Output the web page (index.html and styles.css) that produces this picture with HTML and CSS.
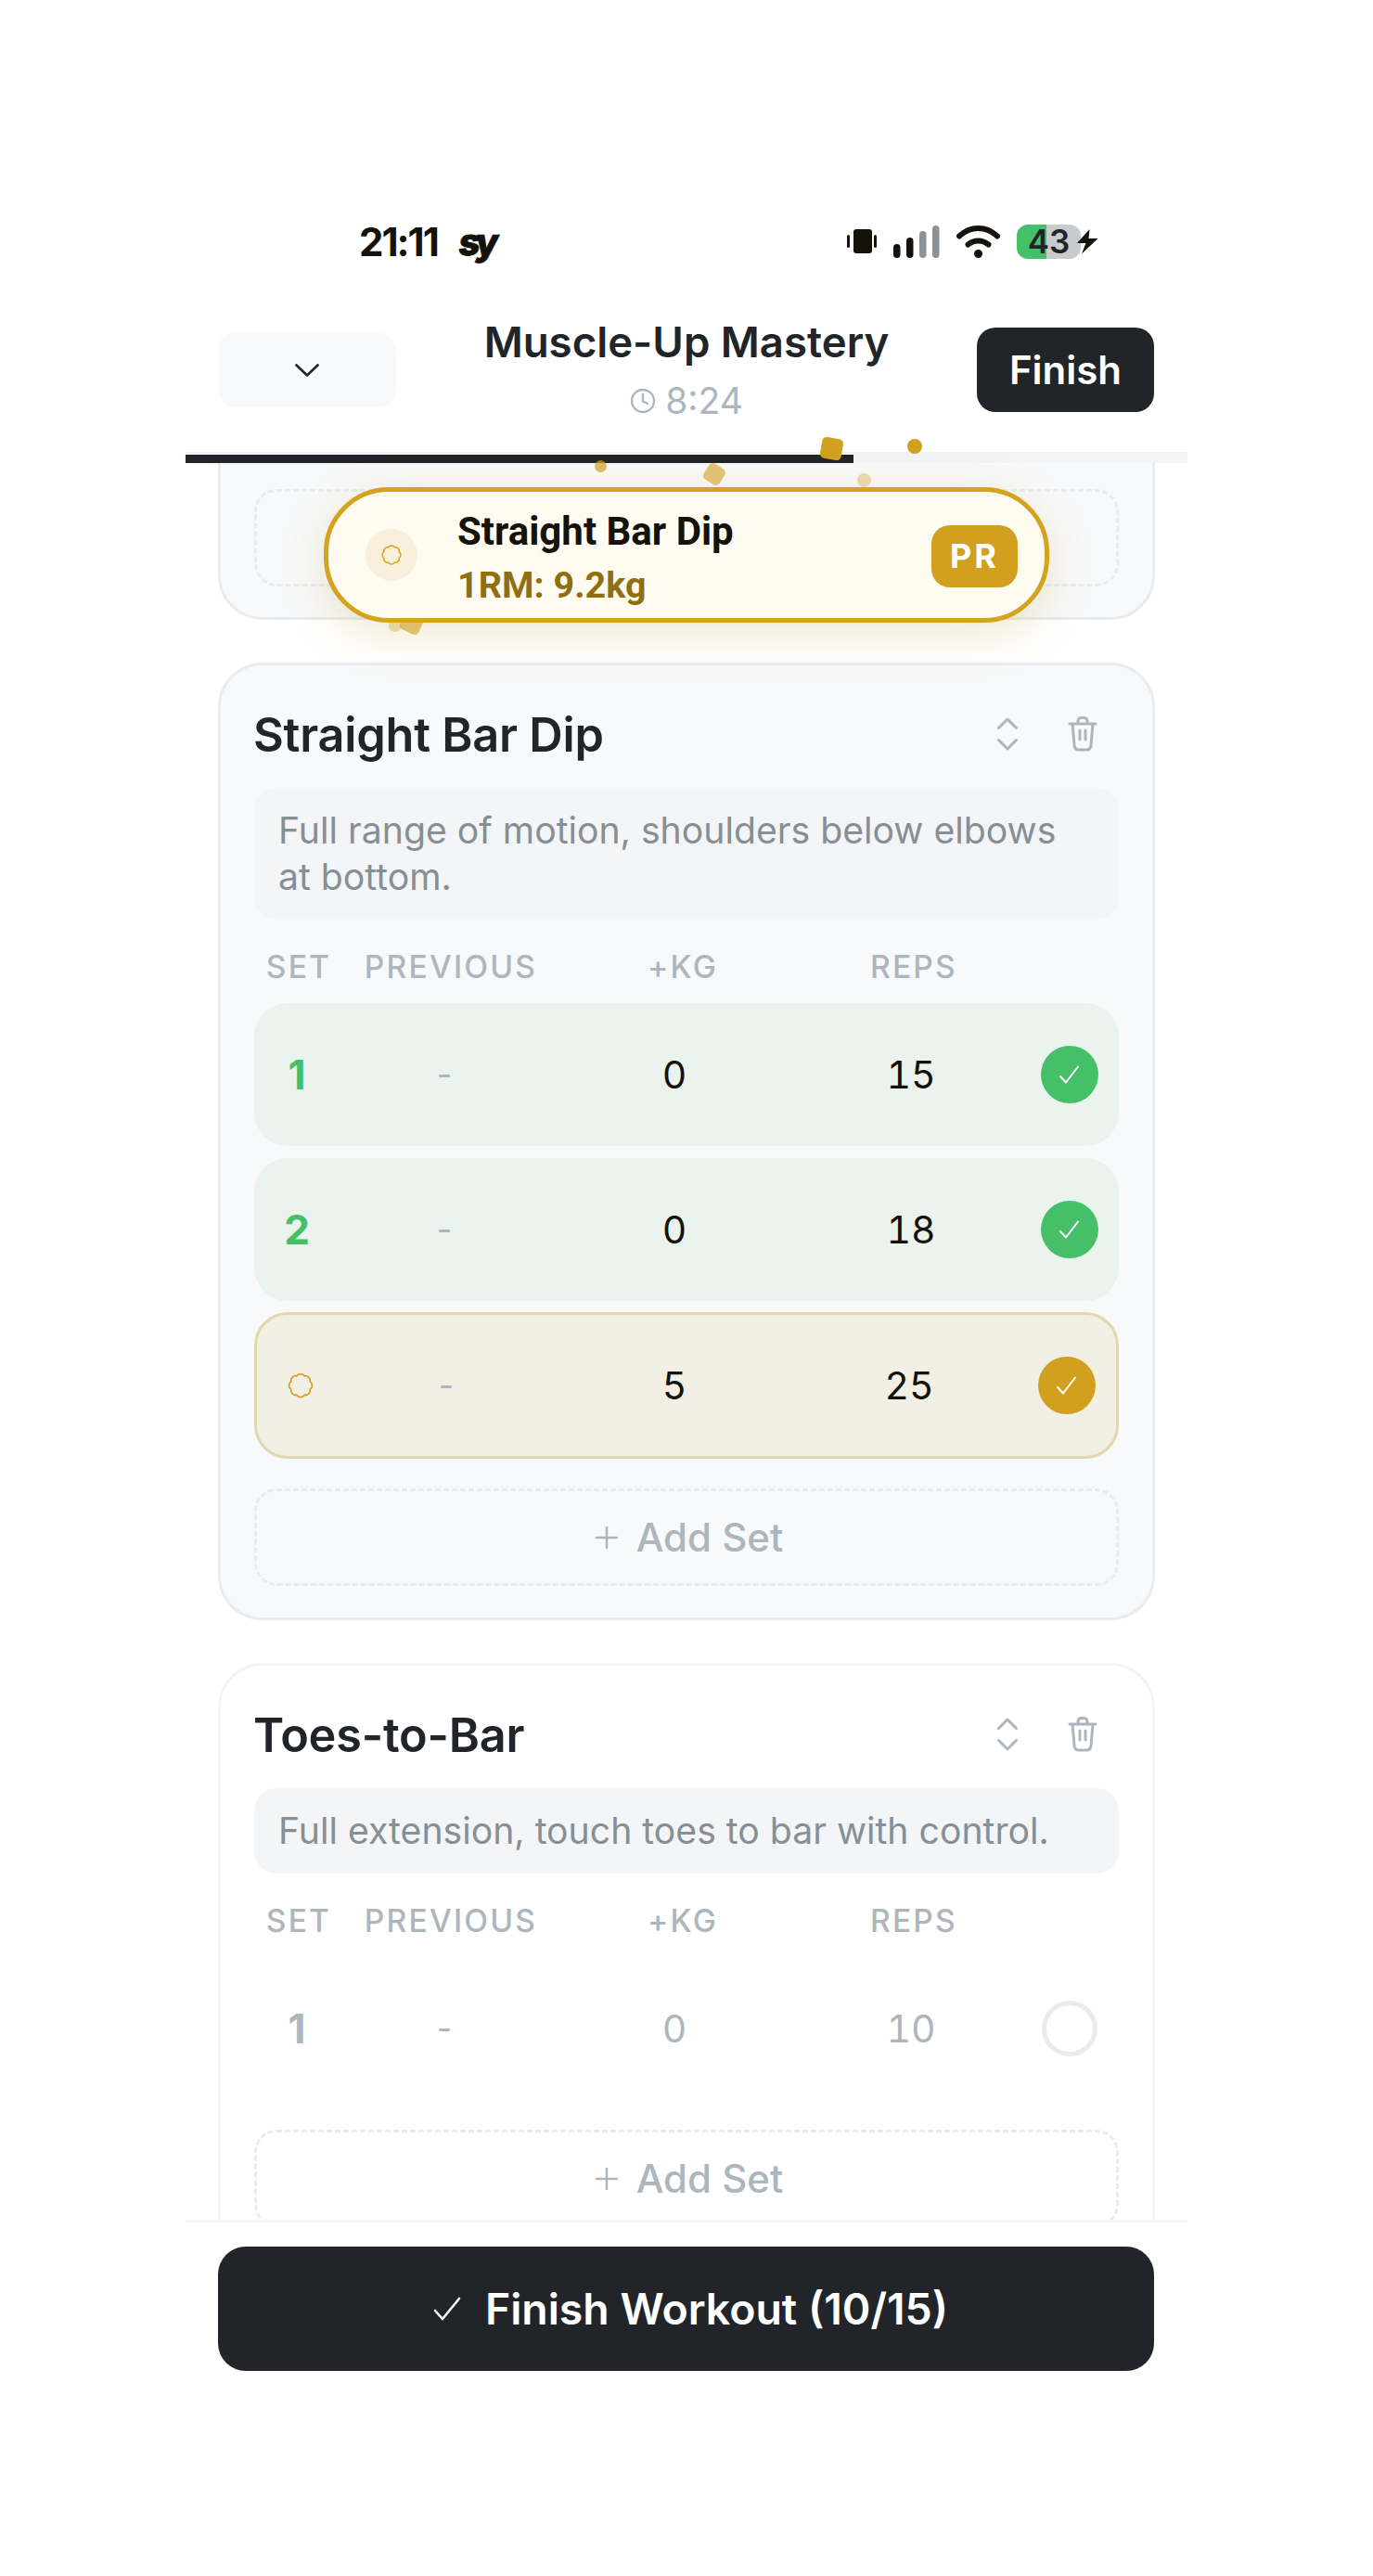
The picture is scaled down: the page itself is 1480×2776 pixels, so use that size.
FILE: index.html
```html
<!DOCTYPE html>
<html lang="en">
<head>
<meta charset="utf-8">
<title>Muscle-Up Mastery</title>
<link rel="stylesheet" href="styles.css">
</head>
<body>
<div class="phone">
  <div class="statusbar">
    <div class="status-left"><span class="clock">21:11</span><span class="carrier">sy</span></div>
    <div class="status-right">
      <svg class="ic-vibrate" width="33" height="26" viewBox="0 0 33 26"><rect x="7" y="0" width="20" height="26" rx="3" fill="#15120a"/><rect x="0" y="6" width="3" height="14" rx="1.5" fill="#15120a"/><rect x="29" y="6" width="3" height="14" rx="1.5" fill="#15120a"/></svg>
      <svg class="ic-signal" width="50" height="35" viewBox="0 0 50 35"><rect x="0" y="20" width="7.5" height="15" rx="3.7" fill="#15120a"/><rect x="14" y="13" width="7.5" height="22" rx="3.7" fill="#15120a"/><rect x="28" y="6" width="7.5" height="29" rx="3.7" fill="#8b9298"/><rect x="42" y="0" width="7.5" height="35" rx="3.7" fill="#8b9298"/></svg>
      <svg class="ic-wifi" width="47" height="36" viewBox="0 0 47 36"><path d="M3 12.5C15 1 32 1 44 12.5" fill="none" stroke="#15120a" stroke-width="6" stroke-linecap="round"/><path d="M12.5 21.500C19 16 28 16 34.500 21.500" fill="none" stroke="#15120a" stroke-width="6" stroke-linecap="round"/><circle cx="23.500" cy="31.500" r="4.500" fill="#15120a"/></svg>
      <span class="battery">43</span>
      <svg class="ic-bolt" width="23" height="27" viewBox="0 0 23 27"><path d="M13.500 0L0 15H9.500L5 26.500L22.500 10H12.500Z" fill="#15120a"/></svg>
    </div>
  </div>

  <header class="topbar">
    <button class="back"><svg width="26" height="14" viewBox="0 0 26 14"><path d="M1.500 1.500L13 12.500L24.500 1.500" fill="none" stroke="#212529" stroke-width="2.600" stroke-linecap="round" stroke-linejoin="round"/></svg></button>
    <div class="title-block">
      <div class="title">Muscle-Up Mastery</div>
      <div class="timer"><svg width="28" height="28" viewBox="0 0 28 28"><circle cx="14" cy="14" r="12" fill="none" stroke="#adb5bd" stroke-width="2.400"/><path d="M14 7V14.500L19 17" fill="none" stroke="#adb5bd" stroke-width="2.400" stroke-linecap="round"/></svg><span>8:24</span></div>
    </div>
    <button class="finish">Finish</button>
  </header>
  <div class="progress"><div class="progress-fill"></div></div>

  <main class="content">
    <section class="card card-active card-clipped">
      <div class="add-set"></div>
    </section>

    <section class="card card-active">
      <div class="card-head">
        <h2>Straight Bar Dip</h2>
        <div class="card-tools">
          <svg width="24" height="36" viewBox="0 0 24 36"><path d="M2.500 11.500L12 2L21.500 11.500M2.500 24.500L12 34L21.500 24.500" fill="none" stroke="#adb5bd" stroke-width="3" stroke-linecap="round" stroke-linejoin="round"/></svg>
          <svg width="32" height="38" viewBox="0 0 32 38"><path d="M2 8H30M5 8L7 31C7.300 34.500 9.500 36 12 36H20C22.500 36 24.700 34.500 25 31L27 8M11 8V5C11 3 12.500 1.500 14.500 1.500H17.500C19.500 1.500 21 3 21 5V8M13 15V25M19 15V25" fill="none" stroke="#adb5bd" stroke-width="3" stroke-linecap="round" stroke-linejoin="round"/></svg>
        </div>
      </div>
      <p class="note">Full range of motion, shoulders below elbows at bottom.</p>
      <div class="labels"><span>SET</span><span>PREVIOUS</span><span>+KG</span><span>REPS</span></div>
      <div class="rows">
        <div class="row row-done"><b class="num">1</b><span class="dash">-</span><span class="val">0</span><span class="val">15</span><span class="check"><svg width="24" height="20" viewBox="0 0 24 20"><path d="M2 12L8 18.500L21 1.500" fill="none" stroke="#fff" stroke-width="2" stroke-linecap="round" stroke-linejoin="round"/></svg></span></div>
        <div class="row row-done"><b class="num">2</b><span class="dash">-</span><span class="val">0</span><span class="val">18</span><span class="check"><svg width="24" height="20" viewBox="0 0 24 20"><path d="M2 12L8 18.500L21 1.500" fill="none" stroke="#fff" stroke-width="2" stroke-linecap="round" stroke-linejoin="round"/></svg></span></div>
        <div class="row row-pr">
          <span class="num"><svg width="30" height="30" viewBox="0 0 24 24"><path d="M3.850 8.620a4 4 0 0 1 4.780-4.770 4 4 0 0 1 6.740 0 4 4 0 0 1 4.780 4.780 4 4 0 0 1 0 6.740 4 4 0 0 1-4.770 4.780 4 4 0 0 1-6.750 0 4 4 0 0 1-4.780-4.770 4 4 0 0 1 0-6.760Z" fill="none" stroke="#d4a421" stroke-width="1.400" stroke-linejoin="round"/></svg></span>
          <span class="dash">-</span><span class="val">5</span><span class="val">25</span><span class="check check-gold"><svg width="24" height="20" viewBox="0 0 24 20"><path d="M2 12L8 18.500L21 1.500" fill="none" stroke="#fff" stroke-width="2" stroke-linecap="round" stroke-linejoin="round"/></svg></span>
        </div>
      </div>
      <button class="add-set add-set-spaced"><svg width="24" height="24" viewBox="0 0 24 24"><path d="M12 1V23M1 12H23" stroke="#adb5bd" stroke-width="2.500" stroke-linecap="round"/></svg><span>Add Set</span></button>
    </section>

    <section class="card">
      <div class="card-head">
        <h2>Toes-to-Bar</h2>
        <div class="card-tools">
          <svg width="24" height="36" viewBox="0 0 24 36"><path d="M2.500 11.500L12 2L21.500 11.500M2.500 24.500L12 34L21.500 24.500" fill="none" stroke="#adb5bd" stroke-width="3" stroke-linecap="round" stroke-linejoin="round"/></svg>
          <svg width="32" height="38" viewBox="0 0 32 38"><path d="M2 8H30M5 8L7 31C7.300 34.500 9.500 36 12 36H20C22.500 36 24.700 34.500 25 31L27 8M11 8V5C11 3 12.500 1.500 14.500 1.500H17.500C19.500 1.500 21 3 21 5V8M13 15V25M19 15V25" fill="none" stroke="#adb5bd" stroke-width="3" stroke-linecap="round" stroke-linejoin="round"/></svg>
        </div>
      </div>
      <p class="note">Full extension, touch toes to bar with control.</p>
      <div class="labels"><span>SET</span><span>PREVIOUS</span><span>+KG</span><span>REPS</span></div>
      <div class="rows">
        <div class="row row-todo"><b class="num">1</b><span class="dash">-</span><span class="val">0</span><span class="val">10</span><span class="check check-empty"></span></div>
      </div>
      <button class="add-set add-set-spaced"><svg width="24" height="24" viewBox="0 0 24 24"><path d="M12 1V23M1 12H23" stroke="#adb5bd" stroke-width="2.500" stroke-linecap="round"/></svg><span>Add Set</span></button>
    </section>
  </main>

  <footer class="bottombar">
    <button class="finish-workout"><svg width="30" height="26" viewBox="0 0 30 26"><path d="M2 15L10 24L28 2" fill="none" stroke="#fff" stroke-width="2.600" stroke-linecap="round" stroke-linejoin="round"/></svg><span>Finish Workout (10/15)</span></button>
  </footer>

  <span class="bit round b-under-1"></span>
  <span class="bit square b-under-2"></span>
  <div class="toast">
    <span class="toast-icon"><svg width="24" height="24" viewBox="0 0 24 24"><path d="M3.850 8.620a4 4 0 0 1 4.780-4.770 4 4 0 0 1 6.740 0 4 4 0 0 1 4.780 4.780 4 4 0 0 1 0 6.740 4 4 0 0 1-4.770 4.780 4 4 0 0 1-6.750 0 4 4 0 0 1-4.780-4.770 4 4 0 0 1 0-6.760Z" fill="none" stroke="#d4a421" stroke-width="1.500" stroke-linejoin="round"/></svg></span>
    <div class="toast-text"><div class="toast-name">Straight Bar Dip</div><div class="toast-sub">1RM: 9.2kg</div></div>
    <span class="toast-badge">PR</span>
  </div>
  <span class="bit square b1"></span>
  <span class="bit round b2"></span>
  <span class="bit round b3"></span>
  <span class="bit square b4"></span>
  <span class="bit round b5"></span>
</div>
</body>
</html>
```
FILE: styles.css
```css
* { box-sizing: border-box; }
html, body { margin: 0; padding: 0; background: #fff; }
body { font-family: Inter, "Liberation Sans", sans-serif; color: #212529; }
button { font-family: inherit; border: 0; padding: 0; cursor: pointer; }
h2, p { margin: 0; }

.phone { position: relative; width: 1080px; height: 2776px; margin-left: 200px; display: flex; flex-direction: column; background: #fff; }

.statusbar { height: 310px; padding: 235px 96px 0 187px; display: flex; justify-content: space-between; flex-shrink: 0; }
.status-left { display: flex; align-items: center; height: 50px; color: #15120a; }
.clock { font-size: 42px; font-weight: 700; letter-spacing: -2px; }
.carrier { display: inline-block; margin-left: 23px; font-size: 40px; font-weight: 800; letter-spacing: -5px; -webkit-text-stroke: 1px #15120a; transform: skewX(-8deg); }
.status-right { display: flex; align-items: center; height: 50px; }
.ic-signal { margin-left: 17px; }
.ic-wifi { margin-left: 18px; }
.battery { margin-left: 18px; width: 69px; height: 37px; border-radius: 12px; background: linear-gradient(90deg, #46bf69 0 46%, #c8cccf 46% 100%); font-size: 35px; line-height: 37px; font-weight: 600; text-align: center; color: #212529; }
.ic-bolt { margin-left: -4px; }

.topbar { height: 180px; padding: 0 36px 0 35px; display: grid; grid-template-columns: 192px 1fr 191px; align-items: center; border-bottom: 3px solid #f1f3f5; flex-shrink: 0; }
.back { height: 81px; border-radius: 20px; background: #f8f9fa; display: flex; align-items: center; justify-content: center; }
.title-block { display: flex; flex-direction: column; align-items: center; padding-top: 1px; }
.title { font-size: 45.6px; font-weight: 600; line-height: 60px; }
.timer { display: flex; align-items: center; gap: 10px; font-size: 39px; line-height: 56px; color: #adb5bd; margin-top: 5px; }
.finish { height: 91px; border-radius: 20px; background: #212529; color: #fff; font-size: 42px; font-weight: 600; }

.progress { height: 9px; background: #f1f3f5; flex-shrink: 0; }
.progress-fill { width: 720px; height: 100%; background: #212529; }

.content { flex: 1; min-height: 0; overflow: hidden; padding: 0 35px; display: flex; flex-direction: column; gap: 46px; }
.card { flex-shrink: 0; padding: 36px 36px 34px; border: 3px solid #f1f3f5; border-radius: 48px; background: #fff; }
.card-active { background: #f8f9fa; border-color: #e9ecef; }
.card-clipped { margin-top: -60px; padding-top: 85px; padding-bottom: 33px; }
.card-head { height: 76px; display: flex; align-items: center; justify-content: space-between; }
.card-head h2 { font-size: 50.4px; font-weight: 600; letter-spacing: -.2px; margin-left: -1px; }
.card-tools { display: flex; align-items: center; gap: 53px; padding-right: 23px; }
.note { margin-top: 20px; padding: 21px 26px; border-radius: 24px; background: #f4f5f7; font-size: 39.2px; line-height: 50px; color: #868e96; }
.labels { margin-top: 31px; height: 40px; display: grid; grid-template-columns: 96px 232px 268px 230px; font-size: 33.6px; line-height: 40px; font-weight: 500; letter-spacing: 2.2px; color: #adb5bd; text-align: center; }
.rows { margin-top: 19px; display: flex; flex-direction: column; gap: 13px; }
.row { height: 154px; border-radius: 36px; display: grid; grid-template-columns: 92px 226px 270px 240px 1fr; align-items: center; text-align: center; font-size: 41px; color: #15120a; }
.row-done { background: #ebf3ee; }
.row-pr { height: 158px; margin-top: -1px; background: #f2f0e4; border: 3px solid #e4d7ae; grid-template-columns: 94px 220px 272px 234px 1fr; }
.row-todo { color: #adb5bd; }
.val { font-variant-numeric: tabular-nums; }
.num { font-weight: 700; font-size: 44px; display: flex; justify-content: center; }
.row-done .num { color: #46bf69; }
.dash { color: #adb5bd; font-size: 36px; }
.check { width: 62px; height: 62px; margin-right: 22px; justify-self: end; border-radius: 50%; background: #46bf69; display: flex; align-items: center; justify-content: center; }
.check-gold { background: #d0a01e; }
.check-empty { width: 60px; height: 60px; margin-right: 23px; background: transparent; border: 5px solid #e9ecef; }

.add-set { width: 100%; height: 105px; padding-left: 6px; display: flex; align-items: center; justify-content: center; gap: 20px; background: transparent; border: 3px dashed #e9ecef; border-radius: 24px; font-size: 42px; font-weight: 500; color: #adb5bd; }
.add-set-spaced { margin-top: 32px; }

.bottombar { height: 384px; flex-shrink: 0; padding: 26px 36px 0 35px; border-top: 3px solid #f1f3f5; background: #fff; }
.finish-workout { width: 100%; height: 134px; padding-left: 10px; border-radius: 30px; background: #212529; color: #fff; display: flex; align-items: center; justify-content: center; gap: 26px; font-size: 46.4px; font-weight: 600; }

.toast { position: absolute; left: 149px; top: 525px; width: 782px; height: 146px; padding: 0 29px 0 40px; display: flex; align-items: center; border: 5px solid #d4a421; border-radius: 70px; background: #fffbf0; box-shadow: 0 12px 48px rgba(190, 150, 30, .22); }
.toast-icon { width: 56px; height: 56px; border-radius: 50%; background: #f9f0dc; display: flex; align-items: center; justify-content: center; flex-shrink: 0; }
.toast-text { margin-left: 43px; padding-top: 5px; flex: 1; font-family: Roboto, sans-serif; font-weight: 700; }
.toast-name { font-size: 42px; line-height: 56px; color: #15120a; }
.toast-sub { font-size: 39.5px; line-height: 52px; color: #8f6f10; margin-top: 4px; }
.toast-badge { width: 93px; height: 67px; margin-top: 2px; border-radius: 20px; background: #d0a01e; color: #fff; font-size: 36px; font-weight: 700; letter-spacing: 3px; display: flex; align-items: center; justify-content: center; }

.bit { position: absolute; background: #d0a01e; }
.round { border-radius: 50%; }
.square { border-radius: 5px; }
.b1 { left: 685px; top: 472px; width: 23px; height: 23px; transform: rotate(10deg); }
.b2 { left: 778px; top: 473px; width: 16px; height: 16px; }
.b3 { left: 441px; top: 496px; width: 13px; height: 13px; opacity: .7; }
.b4 { left: 560px; top: 501px; width: 20px; height: 20px; transform: rotate(32deg); opacity: .6; }
.b5 { left: 724px; top: 510px; width: 15px; height: 15px; opacity: .35; }
.b-under-1 { left: 219px; top: 667px; width: 14px; height: 14px; opacity: .35; }
.b-under-2 { left: 233px; top: 660px; width: 22px; height: 22px; transform: rotate(25deg); opacity: .6; }
```
